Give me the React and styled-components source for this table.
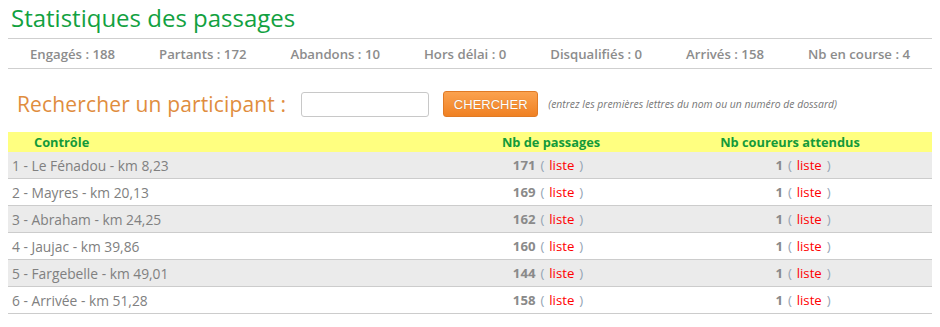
import React from "react";
import styled, { createGlobalStyle } from "styled-components";

const GlobalStyle = createGlobalStyle`
	body {
		margin: 0;
		background: #fff;
		font-family: "Open Sans", "DejaVu Sans", sans-serif;
	}
`;

const Page = styled.div`
	width: 924px;
	padding: 0 8px;
`;

const Title = styled.h1`
	margin: 0 0 5px 0;
	padding: 3px 0 0 3px;
	font-family: "Open Sans", sans-serif;
	font-weight: 400;
	font-size: 24px;
	line-height: 30px;
	color: #12a13f;
`;

const StatsBar = styled.div`
	display: flex;
	justify-content: space-around;
	align-items: center;
	height: 29px;
	border-top: 1px solid #cfcfcf;
	border-bottom: 1px solid #cfcfcf;
`;

const Stat = styled.span`
	font-size: 13.2px;
	font-weight: 600;
	color: #8c8c8c;
`;

const SearchRow = styled.div`
	display: flex;
	align-items: center;
	height: 26px;
	margin-top: 22px;
	padding-left: 9px;
`;

const SearchLabel = styled.span`
	font-size: 21px;
	color: #e08d3e;
	letter-spacing: 0.15px;
`;

const SearchInput = styled.input`
	box-sizing: border-box;
	width: 128px;
	height: 25px;
	margin-left: 15px;
	border: 1px solid #c8c8c8;
	border-radius: 3px;
	background: #fff;
`;

const SearchButton = styled.button`
	box-sizing: border-box;
	width: 95px;
	height: 26px;
	margin-left: 14px;
	border: 1px solid #e07a25;
	border-radius: 3px;
	background: linear-gradient(#fba24f, #f08123);
	color: #fff;
	font-family: "Liberation Sans", Arial, sans-serif;
	font-size: 13px;
	text-shadow: 0 0 1px rgba(0, 0, 0, 0.25);
	padding: 0;
`;

const Hint = styled.span`
	margin-left: 10px;
	font-size: 10.4px;
	font-style: italic;
	color: #777;
`;

const Table = styled.div`
	margin-top: 15px;
`;

const Row = styled.div`
	display: grid;
	grid-template-columns: 1fr 196px 280px;
	align-items: center;
	height: ${(p) => (p.$head ? "20px" : "27px")};
	box-sizing: border-box;
	background: ${(p) => (p.$head ? "#ffff80" : p.$odd ? "#ebebeb" : "#fff")};
	border-bottom: ${(p) => (p.$head ? "none" : "1px solid #cccccc")};
	font-size: 13px;
`;

const HeadCell = styled.div`
	font-weight: 700;
	font-size: 12.8px;
	color: #139a3a;
	text-align: ${(p) => (p.$left ? "left" : "center")};
	padding-left: ${(p) => (p.$left ? "26px" : "0")};
	padding-right: ${(p) => p.$pr || "0"};
`;

const Cell = styled.div`
	color: #808080;
	font-size: ${(p) => (p.$left ? "13.8px" : "13.2px")};
	word-spacing: ${(p) => (p.$left ? "0" : "1.5px")};
	text-align: ${(p) => (p.$left ? "left" : "center")};
	padding-left: ${(p) => p.$pl || "0"};
	padding-right: ${(p) => p.$pr || "0"};
`;

const Count = styled.b`
	color: #8a8a8a;
	font-weight: 700;
`;

const Paren = styled.span`
	color: #93a3b3;
`;

const ListLink = styled.a`
	color: #ff0000;
	text-decoration: none;
`;

const stats = [
	["Engagés", 188],
	["Partants", 172],
	["Abandons", 10],
	["Hors délai", 0],
	["Disqualifiés", 0],
	["Arrivés", 158],
	["Nb en course", 4],
];

const controles = [
	["1 - Le Fénadou - km 8,23", 171, 1],
	["2 - Mayres - km 20,13", 169, 1],
	["3 - Abraham - km 24,25", 162, 1],
	["4 - Jaujac - km 39,86", 160, 1],
	["5 - Fargebelle - km 49,01", 144, 1],
	["6 - Arrivée - km 51,28", 158, 1],
];

const Liste = ({ n }) => (
	<>
		<Count>{n}</Count> <Paren>(</Paren> <ListLink href="#">liste</ListLink>{" "}
		<Paren>)</Paren>
	</>
);

const App = () => {
	return (
		<Page>
			<GlobalStyle />
			<Title>Statistiques des passages</Title>
			<StatsBar>
				{stats.map(([label, val]) => (
					<Stat key={label}>
						{label} : {val}
					</Stat>
				))}
			</StatsBar>
			<SearchRow>
				<SearchLabel>Rechercher un participant :</SearchLabel>
				<SearchInput type="text" />
				<SearchButton>CHERCHER</SearchButton>
				<Hint>(entrez les premières lettres du nom ou un numéro de dossard)</Hint>
			</SearchRow>
			<Table>
				<Row $head>
					<HeadCell $left>Contrôle</HeadCell>
					<HeadCell $pr="6px">Nb de passages</HeadCell>
					<HeadCell $pr="4px">Nb coureurs attendus</HeadCell>
				</Row>
				{controles.map(([nom, passages, attendus], i) => (
					<Row key={nom} $odd={i % 2 === 0}>
						<Cell $left $pl="4px">
							{nom}
						</Cell>
						<Cell $pr="12px">
							<Liste n={passages} />
						</Cell>
						<Cell $pl="22px">
							<Liste n={attendus} />
						</Cell>
					</Row>
				))}
			</Table>
		</Page>
	);
};

export default App;
